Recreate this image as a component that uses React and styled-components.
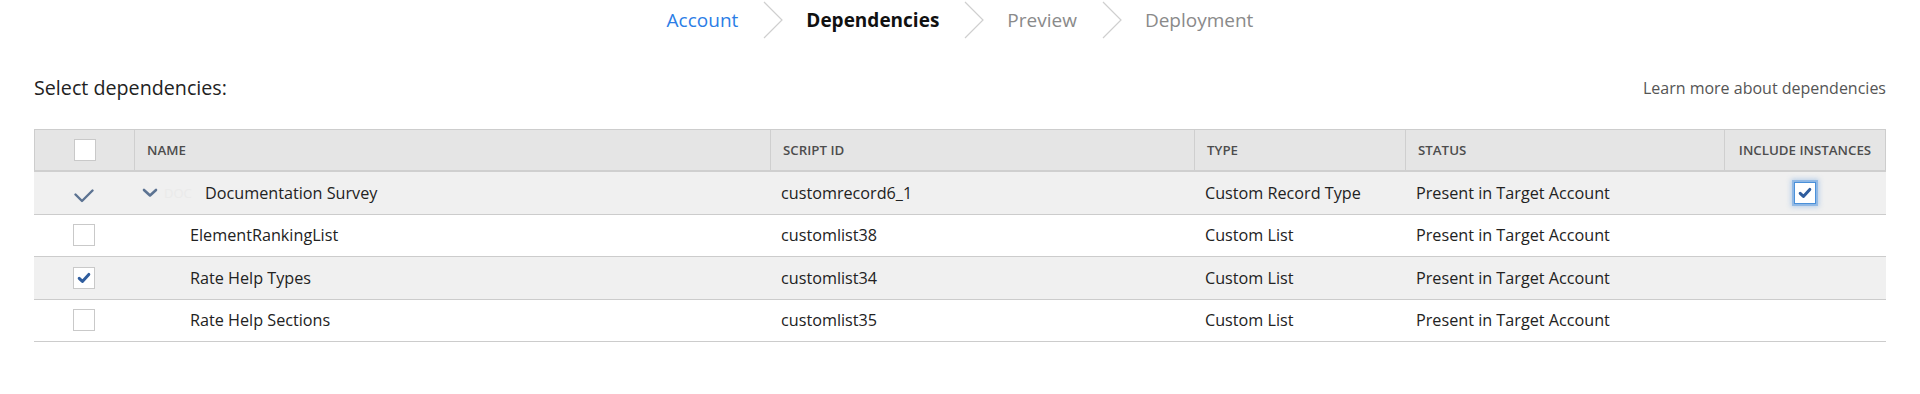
import React from "react";
import styled, { createGlobalStyle } from "styled-components";

const Global = createGlobalStyle`
  html, body { margin: 0; padding: 0; background: #fff; }
  body { font-family: "Open Sans", "Liberation Sans", sans-serif; color: #222; }
`;

const Page = styled.div`
  padding: 0 34px;
`;

const Steps = styled.nav`
  display: flex;
  justify-content: center;
  align-items: center;
  height: 40px;
`;

const Step = styled.span`
  font-size: 19px;
  line-height: 40px;
  font-weight: ${(p) => (p.$state === "current" ? 700 : 400)};
  color: ${(p) =>
    p.$state === "done" ? "#2b7de6" : p.$state === "current" ? "#111" : "#8a8a8a"};
`;

const Chevron = styled.svg`
  display: block;
  width: 20px;
  height: 38px;
  margin: 0 23px 0 25px;
  flex: none;
`;

const TitleRow = styled.div`
  display: flex;
  justify-content: space-between;
  align-items: center;
  margin-top: 34px;
  height: 28px;
`;

const Title = styled.h2`
  margin: 0;
  font-size: 19.7px;
  font-weight: 400;
  color: #222;
  line-height: 28px;
`;

const LearnLink = styled.a`
  font-size: 16px;
  color: #555;
  text-decoration: none;
`;

const Table = styled.div`
  margin-top: 27px;
  width: 100%;
`;

const cols = "99px 636px 424px 211px 319px 1fr";

const HeaderRow = styled.div`
  display: grid;
  grid-template-columns: ${cols};
  background: #e5e5e5;
  border: 1px solid #cdcdcd;
  border-bottom: 2px solid #cfcfcf;
  height: 43px;
  box-sizing: border-box;
`;

const HeadCell = styled.div`
  display: flex;
  align-items: center;
  justify-content: ${(p) => (p.$center ? "center" : "flex-start")};
  padding-left: ${(p) => (p.$center ? 0 : 12)}px;
  font-size: 13.3px;
  font-weight: 600;
  color: #4d4d4d;
  text-transform: uppercase;
  border-left: ${(p) => (p.$first ? "none" : "1px solid #cfcfcf")};
`;

const Row = styled.div`
  display: grid;
  grid-template-columns: ${cols};
  height: 42.5px;
  box-sizing: border-box;
  border-bottom: 1px solid #cccccc;
  background: ${(p) => (p.$shaded ? "#f0f0f0" : "#fff")};
`;

const Cell = styled.div`
  display: flex;
  align-items: center;
  justify-content: ${(p) => (p.$center ? "center" : "flex-start")};
  padding-left: ${(p) => (p.$center ? 0 : p.$pad ?? 12)}px;
  font-size: 16.2px;
  color: #222;
  white-space: nowrap;
`;

const NameText = styled.span`
  padding-left: ${(p) => p.$indent}px;
`;

const Box = styled.span`
  display: inline-flex;
  align-items: center;
  justify-content: center;
  width: 22px;
  height: 22px;
  box-sizing: border-box;
  background: #fff;
  border: 1px solid ${(p) => (p.$focus ? "#4a90d9" : "#c9c9c9")};
  box-shadow: ${(p) => (p.$focus ? "0 0 0 2px rgba(110,165,225,0.6), 0 0 5px 3px rgba(110,165,225,0.45)" : "none")};
`;

const Toggle = styled.svg`
  display: block;
  width: 16px;
  height: 10px;
`;

const Ghost = styled.span`
  font-size: 13px;
  color: #eaeaea;
  margin-left: 6px;
  width: 41px;
  overflow: hidden;
`;

const CheckMark = ({ size = 14 }) => (
  <svg width={size} height={size} viewBox="0 0 14 14" style={{ display: "block" }}>
    <path d="M2.2 7.4 L5.4 10.4 L11.8 3.4" fill="none" stroke="#2f5d9e" strokeWidth="3" strokeLinecap="round" strokeLinejoin="round" />
  </svg>
);

const BareCheck = () => (
  <svg width="20" height="14" viewBox="0 0 20 14" style={{ display: "block", marginTop: 6 }}>
    <path d="M1.5 5.5 L8 12 L18.5 1.5" fill="none" stroke="#5c7392" strokeWidth="2.4" strokeLinecap="round" strokeLinejoin="round" />
  </svg>
);

const ChevronIcon = () => (
  <Chevron viewBox="0 0 20 38">
    <polyline points="1,1 19,19 1,37" fill="none" stroke="#cfcfcf" strokeWidth="1.2" />
  </Chevron>
);

const rows = [
  { name: "ElementRankingList", id: "customlist38", type: "Custom List", checked: false },
  { name: "Rate Help Types", id: "customlist34", type: "Custom List", checked: true },
  { name: "Rate Help Sections", id: "customlist35", type: "Custom List", checked: false },
];

export default function App() {
  return (
    <Page>
      <Global />
      <Steps>
        <Step $state="done">Account</Step>
        <ChevronIcon />
        <Step $state="current">Dependencies</Step>
        <ChevronIcon />
        <Step $state="todo">Preview</Step>
        <ChevronIcon />
        <Step $state="todo">Deployment</Step>
      </Steps>

      <TitleRow>
        <Title>Select dependencies:</Title>
        <LearnLink href="#">Learn more about dependencies</LearnLink>
      </TitleRow>

      <Table>
        <HeaderRow>
          <HeadCell $first $center>
            <Box />
          </HeadCell>
          <HeadCell>Name</HeadCell>
          <HeadCell>Script ID</HeadCell>
          <HeadCell>Type</HeadCell>
          <HeadCell>Status</HeadCell>
          <HeadCell $center>Include Instances</HeadCell>
        </HeaderRow>

        <Row $shaded>
          <Cell $center>
            <BareCheck />
          </Cell>
          <Cell $pad={9}>
            <Toggle viewBox="0 0 16 10">
              <polyline points="2,2 8,7.5 14,2" fill="none" stroke="#5c7392" strokeWidth="2.6" strokeLinecap="round" strokeLinejoin="round" />
            </Toggle>
            <Ghost>DOC</Ghost>
            <NameText $indent={0}>Documentation Survey</NameText>
          </Cell>
          <Cell>customrecord6_1</Cell>
          <Cell>Custom Record Type</Cell>
          <Cell>Present in Target Account</Cell>
          <Cell $center>
            <Box $focus>
              <CheckMark />
            </Box>
          </Cell>
        </Row>

        {rows.map((r) => (
          <Row key={r.id} $shaded={r.checked}>
            <Cell $center>
              <Box>{r.checked && <CheckMark />}</Box>
            </Cell>
            <Cell>
              <NameText $indent={45}>{r.name}</NameText>
            </Cell>
            <Cell>{r.id}</Cell>
            <Cell>{r.type}</Cell>
            <Cell>Present in Target Account</Cell>
            <Cell />
          </Row>
        ))}
      </Table>
    </Page>
  );
}
